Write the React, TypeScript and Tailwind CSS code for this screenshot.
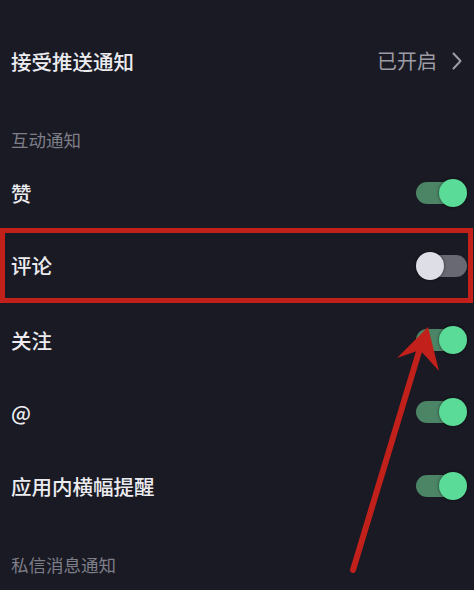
import React from "react";

const font = { fontFamily: '"Noto Sans CJK SC", "Noto Sans", sans-serif' };

function Toggle({ on }: { on: boolean }) {
  return (
    <div className="relative h-[28px] w-[51px] shrink-0">
      {on ? (
        <>
          <div className="absolute left-0 top-[3px] h-[22px] w-[44px] rounded-full bg-[#4c8466]" />
          <div className="absolute left-[23px] top-0 h-[28px] w-[28px] rounded-full bg-[#5bdb98] shadow-[0_0_3px_rgba(0,0,0,0.6)]" />
        </>
      ) : (
        <>
          <div className="absolute left-[6px] top-[3px] h-[22px] w-[45px] rounded-full bg-[#696973]" />
          <div className="absolute left-0 top-0 h-[28px] w-[28px] rounded-full bg-[#dedee6] shadow-[0_0_3px_rgba(0,0,0,0.6)]" />
        </>
      )}
    </div>
  );
}

function Row({ label, on, h }: { label: string; on: boolean; h: string }) {
  return (
    <div className={`flex items-center justify-between pl-[11px] pr-[7px] ${h}`}>
      <span className="text-[20.5px] font-medium leading-none text-[#ececf0]">{label}</span>
      <Toggle on={on} />
    </div>
  );
}

export default function App() {
  return (
    <div className="relative h-[590px] w-[474px] overflow-hidden bg-[#1a1a24]" style={font}>
      <div className="flex flex-col pt-[23px]">
        {/* push notifications */}
        <div className="flex h-[76px] items-center justify-between pl-[11px] pr-[12px]">
          <span className="text-[20.5px] font-medium leading-none text-[#ececf0]">接受推送通知</span>
          <div className="flex items-center gap-[15px]">
            <span className="text-[20px] leading-none text-[#9c9ca4]">已开启</span>
            <svg width="10" height="18" viewBox="0 0 10 18" fill="none">
              <polyline points="1.5,1.5 8.5,9 1.5,16.5" stroke="#9c9ca4" strokeWidth="2" strokeLinecap="round" strokeLinejoin="round" />
            </svg>
          </div>
        </div>

        <div className="flex h-[67px] items-center pl-[11px] pt-[15px]">
          <span className="text-[17.5px] leading-none text-[#7e7e88]">互动通知</span>
        </div>

        <Row label="赞" on h="h-[54px]" />

        <div className="mr-[1px] mt-[8px] flex h-[75px] items-center justify-between border-[5px] border-[#c2201a] pl-[6px] pr-[1px]">
          <span className="text-[20.5px] font-medium leading-none text-[#ececf0]">评论</span>
          <Toggle on={false} />
        </div>

        <Row label="关注" on h="h-[74px]" />
        <Row label="@" on h="h-[70px]" />
        <Row label="应用内横幅提醒" on h="h-[78px]" />

        <div className="flex h-[80px] items-center pl-[11px]">
          <span className="text-[17.5px] leading-none text-[#7e7e88]">私信消息通知</span>
        </div>
      </div>

      {/* annotation arrow */}
      <svg className="pointer-events-none absolute left-0 top-0" width="474" height="590" viewBox="0 0 474 590">
        <line x1="353" y1="570" x2="421" y2="345" stroke="#c2201a" strokeWidth="6" strokeLinecap="round" />
        <polygon points="428,327 397,358 420,350 439,371" fill="#c2201a" />
      </svg>
    </div>
  );
}
